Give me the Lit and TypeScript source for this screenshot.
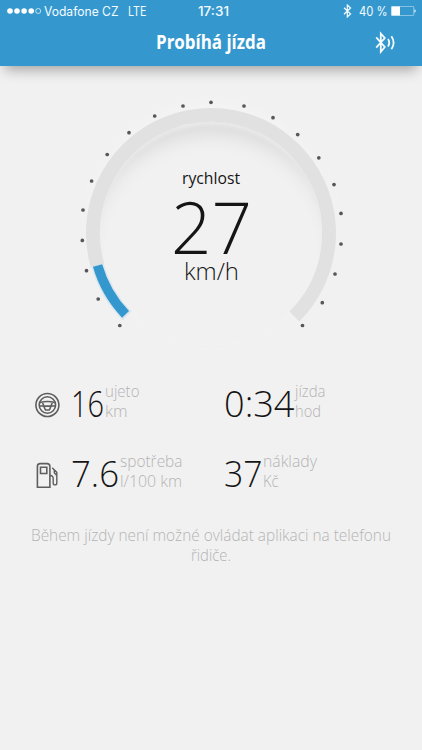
import { LitElement, html, svg, css } from "lit";
import { customElement } from "lit/decorators.js";

/** One line of real text, fitted to a given advance width. */
const line = (text: string, width: number, height: number, baseline: number, cls: string) => html`
  <svg class="line ${cls}" width=${width} height=${height}>
    <text x="0" y=${baseline} textLength=${width} lengthAdjust="spacingAndGlyphs">${text}</text>
  </svg>`;

const polar = (r: number, deg: number): string => {
  const a = (deg * Math.PI) / 180;
  return `${(140 + r * Math.cos(a)).toFixed(2)} ${(140 + r * Math.sin(a)).toFixed(2)}`;
};
const arc = (r: number, from: number, to: number): string =>
  `M${polar(r, from)}A${r} ${r} 0 ${to - from > 180 ? 1 : 0} 1 ${polar(r, to)}`;

@customElement("speed-gauge")
class SpeedGauge extends LitElement {
  static styles = css`
    :host { display: grid; width: 280px; height: 280px; }
    :host > * { grid-area: 1 / 1; }
    .well {
      width: 222px; height: 222px; border-radius: 50%;
      place-self: center;
      box-shadow: inset 0 5px 4px -2px #ebebeb, inset 0 26px 18px -14px #dadada, 0 -12px 20px 4px #f5f5f5;
    }
    .dial { display: block; z-index: 1; }
    .track { fill: none; stroke: #e1e1e1; stroke-width: 14; }
    .edge { fill: none; stroke: #dae6ee; stroke-width: 12.6; }
    .value { fill: none; stroke: #3498ce; stroke-width: 9.6; }
    .dots { fill: #575757; }
    .readout { z-index: 2; display: flex; flex-direction: column; align-items: center; padding-top: 74px; }
    .line { display: block; overflow: visible; fill: #151515; font-family: "Open Sans", "Noto Sans", sans-serif; font-weight: 300; }
    .label { font-size: 17px; font-weight: 400; }
    .number { font-size: 72px; }
    .unit { font-size: 23.5px; }
  `;
  private dots = [
    [48.8, 232.5], [27.2, 206], [15.5, 177.7], [11.3, 147.4], [12, 117], [20.6, 88],
    [36.2, 61.5], [58, 39.7], [83.7, 23], [112, 13], [140, 9.3], [173, 13],
    [202, 24.7], [226.7, 41.6], [247.8, 64.8], [263, 91.6], [270, 120.4],
    [270, 151], [264, 181], [251.3, 209.7], [231.5, 232.5],
  ];
  render() {
    return html`
      <div class="well"></div>
      <svg class="dial" width="280" height="280" viewBox="0 0 280 280">
        <path class="track" d=${arc(118, 164, 405)} />
        <path class="edge" d=${arc(118, 135.4, 164)} />
        <path class="value" d=${arc(118, 136.4, 164)} />
        <g class="dots">${this.dots.map(([x, y]) => svg`<circle cx=${x} cy=${y} r="1.85" />`)}</g>
      </svg>
      <div class="readout">
        ${line("rychlost", 58, 28, 17, "label")}
        ${line("27", 81, 60, 58.5, "number")}
        ${line("km/h", 55, 28, 25, "unit")}
      </div>`;
  }
}

@customElement("app-root")
class AppRoot extends LitElement {
  static styles = css`
    :host { display: block; width: 422px; height: 750px; background: #f1f1f1; overflow: hidden; font-family: "Open Sans", "Noto Sans", sans-serif; }
    header { height: 66px; background: #3498ce; box-shadow: 0 9px 12px -5px rgba(0, 0, 0, 0.32); }
    svg { display: block; flex: none; }
    .line { overflow: visible; }
    .status { display: flex; height: 22px; align-items: center; padding-left: 7px; }
    .sys { fill: #f4fbff; font: 400 12.5px Inter, "Liberation Sans", sans-serif; }
    .time { font-weight: 500; }
    .carrier { margin-left: 2px; }
    .net { margin-left: 9px; }
    .clock { margin-left: 52px; }
    .bt { margin-left: 114px; }
    .pct { margin-left: 7px; }
    .battery { margin-left: 3px; }
    .nav { display: grid; grid-template-columns: 156px 110px 1fr; height: 44px; }
    .nav .line { grid-column: 2; }
    .title { fill: #fff; font-size: 19.5px; font-weight: 700; }
    .link { grid-column: 3; margin: 9px 0 0 109px; }
    .stroke { fill: none; stroke: #f6fcff; }
    speed-gauge { margin: 27px auto 0; }
    .stats { display: grid; grid-template-columns: 35px 36px 152.5px 1fr; grid-template-rows: 70px 70px; margin-top: 8px; }
    .stats .icon { grid-column: 2; margin-top: 11px; }
    .stat { display: flex; gap: 1px; }
    .big { fill: #151515; font-size: 36.5px; font-weight: 300; }
    .small { fill: #b4b4b4; font-size: 16.5px; font-weight: 300; }
    .icon { fill: none; stroke: #5e5e5e; stroke-width: 1.6; }
    .note { display: flex; flex-direction: column; align-items: center; margin-top: 2px; }
    .note .line { fill: #b4b4b4; font-size: 16.5px; font-weight: 300; }
  `;
  private stat(value: string, w: number, top: string, tw: number, bottom: string, bw: number) {
    return html`<div class="stat">
      ${line(value, w, 50, 36, "big")}
      <div>${line(top, tw, 20, 15.5, "small")}${line(bottom, bw, 20, 16, "small")}</div>
    </div>`;
  }
  render() {
    return html`
      <header>
        <div class="status">
          <svg width="35" height="8" viewBox="0 0 35 8">
            <g fill="#fff"><circle cx="3" cy="4" r="2.8" /><circle cx="10" cy="4" r="2.8" /><circle cx="17.1" cy="4" r="2.8" /><circle cx="24.2" cy="4" r="2.8" /></g>
            <circle class="stroke" cx="31.2" cy="4" r="2.5" stroke-width=".7" />
          </svg>
          <span class="carrier">${line("Vodafone CZ", 74.5, 14, 11.5, "sys")}</span>
          <span class="net">${line("LTE", 18.5, 14, 11.5, "sys")}</span>
          <span class="clock">${line("17:31", 31, 14, 11.5, "sys time")}</span>
          <svg class="bt" width="9" height="14" viewBox="0 0 9 14">
            <path class="stroke" d="M1 3.8 7.6 10 4.3 13V1L7.6 4 1 10.2" stroke-width="1.2" />
          </svg>
          <span class="pct">${line("40 %", 28.5, 14, 11.5, "sys")}</span>
          <svg class="battery" width="25" height="10" viewBox="0 0 25 10">
            <rect class="stroke" x=".4" y=".4" width="22.4" height="9.2" rx="1" stroke-width=".6" opacity=".8" />
            <path d="M.5.5H9V9.5H.5zM23.5 3.3q1.2.4 1.2 1.7t-1.2 1.7z" fill="#fff" />
          </svg>
        </div>
        <div class="nav">
          ${line("Probíhá jízda", 110, 40, 27, "title")}
          <svg class="link" width="22" height="24" viewBox="0 0 22 24">
            <g class="stroke" stroke-width="1.8">
              <path d="M1.2 6.4 9.8 16 5.8 20.8V2.5L9.8 7 1.2 16.6" />
              <path d="M13 8q2.4 3.7 0 7.4M16.4 5.2q4.4 6.5 0 13" />
            </g>
          </svg>
        </div>
      </header>
      <speed-gauge></speed-gauge>
      <div class="stats">
        <svg class="icon" width="25" height="26" viewBox="0 0 25 26">
          <circle cx="12.4" cy="13" r="11.5" /><circle cx="12.4" cy="13" r="8.2" />
          <path d="M4.8 10.6q7.6-2.1 15.2 0M4.4 14h3.4q1.2 0 1.7 1.8t1.2 2.2h3.4q.7-.4 1.2-2.2T17 14h3.4M7.4 10.3l1.4 3.7M17.4 10.3 16 14M9 14.1h6.8" />
        </svg>
        ${this.stat("16", 33, "ujeto", 34.5, "km", 22.5)}
        ${this.stat("0:34", 70.5, "jízda", 30.5, "hod", 26)}
        <svg class="icon" width="25" height="27" viewBox="0 0 25 27">
          <path d="M2.4 25.2V4.4Q2.4 1.6 5.2 1.6H12Q14.9 1.6 14.9 4.4V25.2zM5.5 5.2h6.3v6.3H5.5z" />
          <path d="M15 13.5q3.2-.2 3.2 3v4.4q0 2 1.8 2t1.8-2v-7.4l-2.5-2.7V8l-2-2.3M19.5 8l2.3 2.3v3.5" stroke-width="1.4" />
        </svg>
        ${this.stat("7.6", 48, "spotřeba", 62.5, "l/100 km", 62)}
        ${this.stat("37", 38.5, "náklady", 54, "Kč", 15.5)}
      </div>
      <div class="note">
        ${line("Během jízdy není možné ovládat aplikaci na telefonu", 360, 20, 17.5, "")}
        ${line("řidiče.", 40, 20, 17.5, "")}
      </div>`;
  }
}
